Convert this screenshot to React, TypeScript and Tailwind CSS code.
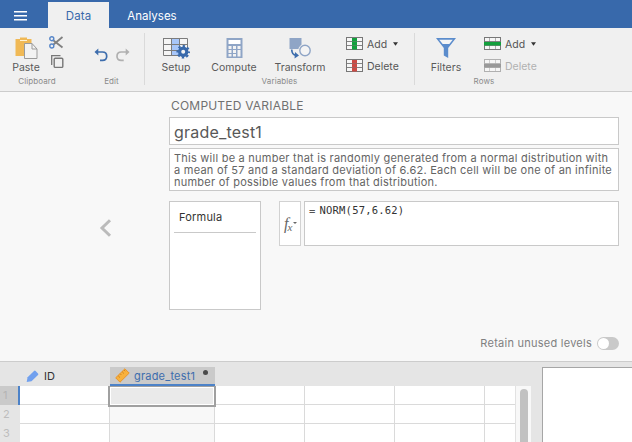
import React from "react";

const LINE = "#777777";

function GridIcon({ fill, dir, line = LINE }: { fill: string; dir: "col" | "row"; line?: string }) {
  return (
    <svg width="18" height="14" viewBox="0 0 18 14" className="block shrink-0">
      <rect x="0.5" y="0.5" width="16" height="12" fill="#f6f6f6" stroke={line} />
      <path d="M0 4.5H17M0 8.5H17" stroke={line} strokeWidth="0.9" />
      {dir === "col" ? (
        <>
          <rect x="6" y="1" width="5" height="11.5" fill={fill} />
          <path d="M6 4.5H11M6 8.5H11" stroke={line} strokeWidth="0.8" opacity="0.6" />
        </>
      ) : (
        <>
          <path d="M5.5 0V13M11.5 0V13" stroke={line} strokeWidth="0.8" opacity="0.7" />
          <rect x="0" y="5" width="17" height="3.5" fill={fill} />
        </>
      )}
    </svg>
  );
}

function Caret() {
  return (
    <svg width="5" height="4" viewBox="0 0 5 4" className="block">
      <path d="M0 0.3H5L2.5 3.8Z" fill="#333" />
    </svg>
  );
}

function SmallAction({ icon, label, caret, muted }: { icon: React.ReactNode; label: string; caret?: boolean; muted?: boolean }) {
  return (
    <div className="flex h-[14px] items-center">
      {icon}
      <span className={`ml-[3px] mt-px text-[10.5px] leading-[14px] ${muted ? "text-[#b0b0b0]" : "text-[#555]"}`}>{label}</span>
      {caret && <span className="ml-[6px] flex"><Caret /></span>}
    </div>
  );
}

function BigButton({ width, label, children }: { width: string; label: string; children: React.ReactNode }) {
  return (
    <div className={`flex shrink-0 flex-col items-center ${width}`}>
      <div className="flex h-[24px] items-start justify-center">{children}</div>
      <span className="text-[10.5px] leading-[14px] text-[#5a5a5a]">{label}</span>
    </div>
  );
}

function GroupName({ children }: { children: React.ReactNode }) {
  return <div className="text-center text-[8px] leading-[10px] tracking-[0.1px] text-[#8a8a8a]">{children}</div>;
}

function Ribbon() {
  return (
    <div className="flex h-[64px] border-b border-[#cccccc] bg-[#f0f0f0] pt-[5px]">
      <section className="w-[74px]">
        <div className="flex h-[43px] pt-[4px]">
          <BigButton width="w-[52px]" label="Paste">
            <svg width="23" height="23" viewBox="0 0 23 23">
              <path d="M0.5 2H5V0.5H12V2H16.5V19H0.5Z" fill="#f0b956" />
              <path d="M5 3.5H12" stroke="#fff3d7" />
              <path d="M9.5 6.5H17L22 12V21.5H9.5Z" fill="#f3f3f3" stroke="#9b9b9b" />
              <path d="M17 6.5V12H22" fill="none" stroke="#9b9b9b" />
            </svg>
          </BigButton>
          <div className="-ml-[3px] -mt-px flex flex-col gap-[6px]">
            <svg width="15" height="13" viewBox="0 0 15 13">
              <path d="M4.5 4.5L13.5 11.5M4.5 8.5L13.5 1" stroke="#808080" strokeWidth="1.8" />
              <circle cx="2.8" cy="2.7" r="2" fill="none" stroke="#5585c8" strokeWidth="1.4" />
              <circle cx="2.8" cy="10" r="2" fill="none" stroke="#5585c8" strokeWidth="1.4" />
            </svg>
            <svg width="14" height="14" viewBox="0 0 14 14" className="ml-[2px]">
              <path d="M0.7 10V0.7H9.5" fill="none" stroke="#777" strokeWidth="1.3" />
              <rect x="3.2" y="3.2" width="8.6" height="9.2" rx="1" fill="none" stroke="#777" strokeWidth="1.4" />
            </svg>
          </div>
        </div>
        <GroupName>Clipboard</GroupName>
      </section>
      <section className="w-[70px]">
        <div className="flex h-[43px] gap-[8px] pl-[20px] pt-[15px]">
          <svg width="14" height="14" viewBox="0 0 14 14">
            <path d="M2 4H8.5Q12.7 4 12.7 8.2Q12.7 12.3 8.5 12.3H6" fill="none" stroke="#3d6dad" strokeWidth="1.7" />
            <path d="M0.5 4L4.3 0.6V7.4Z" fill="#3d6dad" />
          </svg>
          <svg width="14" height="14" viewBox="0 0 14 14">
            <path d="M12 4H5.2Q1 4 1 8.2Q1 12.3 5.2 12.3H7.7" fill="none" stroke="#b0b0b0" strokeWidth="1.7" />
            <path d="M13.5 4L9.7 0.6V7.4Z" fill="#b0b0b0" />
          </svg>
        </div>
        <div className="pl-[5px]"><GroupName>Edit</GroupName></div>
      </section>
      <div className="h-[52px] w-px bg-[#dadada]" />
      <section className="w-[269px]">
        <div className="flex h-[43px] pt-[4px]">
          <BigButton width="w-[62px]" label="Setup">
            <svg width="28" height="23" viewBox="0 0 28 23">
              <rect x="1.5" y="1.5" width="24" height="17" fill="#f5f5f5" />
              <rect x="10" y="1.5" width="7" height="17" fill="#a8c7fa" />
              <path d="M1.5 1.5H25.5V13M1.5 1V18.5H17M1.5 7.5H25.5M1.5 13.5H17M9.5 1V18M17.5 1V13" fill="none" stroke="#7c7c7c" />
              <circle cx="21.2" cy="14.8" r="3.6" fill="#f3f3f3" stroke="#3869ab" strokeWidth="3.2" />
              <circle cx="21.2" cy="14.8" r="5.8" fill="none" stroke="#3869ab" strokeWidth="2" strokeDasharray="2.4 2.155" strokeDashoffset="1.2" />
            </svg>
          </BigButton>
          <BigButton width="w-[54px]" label="Compute">
            <svg width="17" height="22" viewBox="0 0 17 22">
              <rect x="0.5" y="1" width="16" height="20" fill="#8fa5c6" />
              <rect x="2.5" y="3" width="12" height="4" fill="#fff" />
              <path d="M2.5 9H5.5V12H2.5ZM7 9H10V12H7ZM11.5 9H14.5V12H11.5ZM2.5 13H5.5V16H2.5ZM7 13H10V16H7ZM2.5 17H5.5V19.5H2.5ZM7 17H10V19.5H7ZM11.5 13H14.5V19.5H11.5Z" fill="#f3f3f3" />
            </svg>
          </BigButton>
          <BigButton width="w-[78px]" label="Transform">
            <svg width="24" height="23" viewBox="0 0 24 23">
              <rect x="1.5" y="1" width="12" height="11" fill="#8fa5c6" />
              <circle cx="17" cy="13.5" r="5.3" fill="#f0f0f0" stroke="#f0f0f0" strokeWidth="3" />
              <circle cx="17" cy="13.5" r="5.2" fill="#f4f4f4" stroke="#8fa5c6" strokeWidth="1.4" />
              <path d="M3.7 12.5Q4 18 8 18.3" fill="none" stroke="#3d6dad" strokeWidth="1.7" />
              <path d="M7 15L11 18.5L6.5 21.5Z" fill="#3d6dad" />
            </svg>
          </BigButton>
          <div className="ml-[7px] flex flex-col gap-[8px]">
            <SmallAction icon={<GridIcon fill="#12a03c" dir="col" />} label="Add" caret />
            <SmallAction icon={<GridIcon fill="#cb4b45" dir="col" />} label="Delete" />
          </div>
        </div>
        <GroupName>Variables</GroupName>
      </section>
      <div className="h-[52px] w-px bg-[#dadada]" />
      <section className="w-[138px]">
        <div className="flex h-[43px] pt-[4px]">
          <BigButton width="w-[62px]" label="Filters">
            <svg width="22" height="23" viewBox="0 0 22 23">
              <path d="M1 1H21L13.2 11V21L8.8 18.5V11Z" fill="#5b8ccc" />
              <path d="M4.2 2.8H17.8L14.3 7H7.7Z" fill="#f5f5f5" />
            </svg>
          </BigButton>
          <div className="ml-[7px] flex flex-col gap-[8px]">
            <SmallAction icon={<GridIcon fill="#12a03c" dir="row" />} label="Add" caret />
            <SmallAction icon={<GridIcon fill="#999" dir="row" line="#b0b0b0" />} label="Delete" muted />
          </div>
        </div>
        <GroupName>Rows</GroupName>
      </section>
    </div>
  );
}

function VariableEditor() {
  return (
    <div className="flex h-[270px] border-b border-[#cccccc] bg-[#f8f8f8]">
      <div className="w-[169px] pl-[99px] pt-[127px]">
        <svg width="13" height="18" viewBox="0 0 13 18">
          <path d="M11 1.2L3 9L11 16.8" fill="none" stroke="#bbb" strokeWidth="3" />
        </svg>
      </div>
      <div className="w-[450px]">
        <h1 className="h-[25px] whitespace-nowrap pl-[2px] pt-[6px] text-[12px] leading-[16px] tracking-[0.2px] text-[#707070]">COMPUTED VARIABLE</h1>
        <div className="h-[28px] border border-[#c9c9c9] bg-white pl-[4px] text-[16px] leading-[28px] tracking-[0.2px] text-[#585858]">grade_test1</div>
        <div className="mt-[3px] h-[43px] whitespace-nowrap border border-[#c9c9c9] bg-white pl-[4px] pt-[3px] text-[11px] leading-[12px] tracking-[0.24px] text-[#646464]">
          This will be a number that is randomly generated from a normal distribution with
          <br />a mean of 57 and a standard deviation of 6.62. Each cell will be one of an infinite
          <br />number of possible values from that distribution.
        </div>
        <div className="mt-[10px] flex items-start">
          <div className="h-[109px] w-[92px] border border-[#c9c9c9] bg-white px-[4px]">
            <div className="h-[31px] border-b border-[#c9c9c9] pl-[5px] pt-[8px] text-[11px] leading-[14px] tracking-[0.2px] text-[#333]">Formula</div>
          </div>
          <div className="ml-[18px] flex h-[45px] w-[22px] items-center border border-[#d2d2d2] bg-white pl-[4px] font-['Liberation_Serif',serif] italic text-[#666]">
            <span className="text-[16px] leading-[16px]">f</span>
            <span className="-ml-[1px] mt-[8px] text-[11px] leading-[9px]">x</span>
            <span className="ml-px mt-[-2px] h-0 w-0 shrink-0 border-x-2 border-t-2 border-x-transparent border-t-[#666]" />
          </div>
          <div className="ml-[3px] flex h-[45px] w-[315px] border border-[#c9c9c9] bg-white pl-[4px] pt-px font-['DejaVu_Sans_Mono',monospace] text-[10.5px] leading-[14px] tracking-[0.2px] text-[#333]">
            <span className="mr-[4px] pt-px text-[#555]">=</span>
            <span>NORM(57,6.62)</span>
          </div>
        </div>
        <div className="mt-[26px] flex items-center justify-end">
          <span className="text-[11px] leading-[14px] tracking-[0.25px] text-[#808080]">Retain unused levels</span>
          <span className="ml-[5px] flex h-[13px] w-[22px] items-center rounded-full bg-[#c9c9c9] p-px">
            <span className="h-[11px] w-[11px] rounded-full bg-white" />
          </span>
        </div>
      </div>
    </div>
  );
}

function SheetRow({ n, active }: { n: number; active?: boolean }) {
  return (
    <div className="flex h-[19px] shrink-0">
      <div className={`w-[20px] pl-[3px] text-[11px] leading-[18px] ${active ? "border-r-2 border-[#4c82c8] bg-[#cacaca] text-[#b4b4b4]" : "bg-[#e5e5e5] text-[#bdbdbd]"}`}>{n}</div>
      <div className="w-[90px] border-b border-r border-[#dadada] bg-white" />
      <div className="w-[105px] border-b border-r border-[#dadada] bg-[#f8f8f8]">
        {active && <div className="relative -left-[2px] h-[21px] w-[108px] border-2 border-t border-[#a0a0a0] bg-[#eaeaea] shadow-[inset_0_0_0_1px_#fff]" />}
      </div>
      <div className="w-[90px] border-b border-r border-[#dadada] bg-white" />
      <div className="w-[90px] border-b border-r border-[#dadada] bg-white" />
      <div className="w-[90px] border-b border-r border-[#dadada] bg-white" />
      <div className="w-[30px] border-b border-[#dadada] bg-white" />
    </div>
  );
}

function Spreadsheet() {
  return (
    <div className="flex h-[80px] overflow-hidden bg-[#e5e5e5]">
      <div className="w-[531px]">
        <div className="flex h-[24px] items-end text-[11px]">
          <div className="flex h-[19px] w-[110px] items-center pl-[26px]">
            <svg width="14" height="13" viewBox="0 0 14 13">
              <path d="M0.7 12L1.6 7.2L8 0.9Q8.8 0.3 9.6 1L12 3.5Q12.7 4.3 12 5.1L5.5 11.3Z" fill="#71a0ee" />
            </svg>
            <span className="ml-[4px] text-[#333]">ID</span>
          </div>
          <div className="flex h-[19px] w-[105px] items-center border-b-2 border-[#4c82c8] bg-[#cacaca] pl-[5px]">
            <svg width="15" height="15" viewBox="0 0 15 15">
              <path d="M0.7 9.8L9.9 0.8L14.2 5.1L5 14.2Z" fill="#f8b13c" stroke="#e9952a" strokeWidth="1" strokeLinejoin="round" />
              <path d="M3.2 7.8L5 9.6M5.2 5.8L6.4 7M7.2 3.8L9 5.6M9 2L10.2 3.2" stroke="#c77a1c" strokeWidth="0.8" />
            </svg>
            <span className="ml-[4px] mt-[2px] tracking-[0.2px] text-[#3d6dad]">grade_test1</span>
            <span className="mb-[6px] ml-[8px] h-[5px] w-[5px] rounded-full bg-[#4a4a4a]" />
          </div>
        </div>
        <div className="flex h-[56px] overflow-hidden">
          <div className="flex w-[515px] flex-col">
            <SheetRow n={1} active />
            <SheetRow n={2} />
            <SheetRow n={3} />
          </div>
          <div className="flex w-[16px] justify-center border-l border-[#e2e2e2] bg-[#f8f8f8] pt-[3px]">
            <div className="h-[80px] w-[8px] rounded-full bg-[#c1c1c1]" />
          </div>
        </div>
      </div>
      <div className="ml-[11px] mt-[5px] w-[90px] border-l border-t border-[#a6a6a6] bg-white" />
    </div>
  );
}

export default function App() {
  return (
    <div className="h-[442px] w-[632px] overflow-hidden bg-[#e5e5e5] font-['Inter',sans-serif]">
      <header className="flex h-[28px] bg-[#3869ab] text-[11.5px]">
        <div className="w-[48px] pl-[14px] pt-[11px]">
          <svg width="13" height="10" viewBox="0 0 13 10" className="block">
            <path d="M0 0.8H13M0 4.8H13M0 8.8H13" stroke="#fff" strokeWidth="1.5" />
          </svg>
        </div>
        <div className="mt-[2px] w-[61px] bg-[#f0f0f0] text-center leading-[28px] tracking-[0.1px] text-[#3869ab]">Data</div>
        <div className="w-[86px] pt-[2px] text-center leading-[28px] text-white">Analyses</div>
      </header>
      <Ribbon />
      <VariableEditor />
      <Spreadsheet />
    </div>
  );
}
